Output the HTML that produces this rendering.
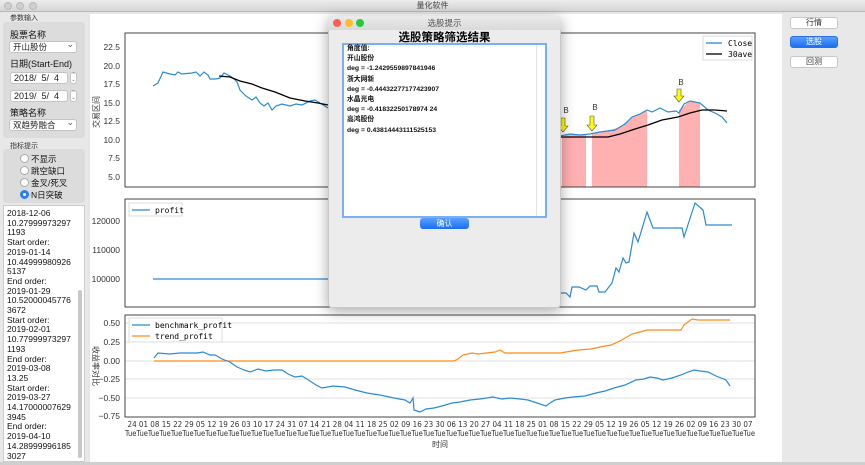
<!DOCTYPE html>
<html><head><meta charset="utf-8"><style>
*{margin:0;padding:0;box-sizing:border-box}
body{width:865px;height:465px;overflow:hidden;background:#e6e6e6;font-family:"Liberation Sans","Noto Sans CJK SC",sans-serif;position:relative;font-size:9px;color:#222}
.abs{position:absolute}
.tb{left:0;top:0;width:865px;height:12px;background:linear-gradient(#ececec,#d6d6d6);border-bottom:1px solid #b8b8b8;text-align:center;font-size:8px;line-height:12px;color:#444}
.dot{width:8px;height:8px;border-radius:50%;top:2px;background:#cfcfcf;border:1px solid #bbb}
.box{background:#dcdcdc;border-radius:3px}
.lbl{font-size:9px;color:#111}
.combo{background:#fff;border:1px solid #c4c4c4;border-radius:3px;font-size:8.5px;line-height:10px;padding-left:3px}
.dd:after{content:"⌄";position:absolute;right:2px;top:-3px;font-size:9px;color:#555}
.radio{width:9px;height:9px;border-radius:50%;background:#fff;border:1px solid #aaa}
.btn{background:#fff;border:1px solid #c8c8c8;border-radius:3px;text-align:center;font-size:8px;line-height:10px;color:#333}
.step{width:7px;height:12px;background:#fff;border:1px solid #c4c4c4;border-radius:3px;font-size:5px;line-height:5px;text-align:center;color:#555}
</style></head><body>
<div class="abs tb">量化软件</div>
<div class="abs dot" style="left:4px"></div><div class="abs dot" style="left:16px"></div><div class="abs dot" style="left:29px"></div>

<div class="abs" style="left:0;top:13px;width:88px;height:452px;background:#e8e8e8"></div>
<div class="abs" style="left:10px;top:13px;font-size:7px;color:#333">参数输入</div>
<div class="abs box" style="left:3px;top:22px;width:82px;height:116px"></div>
<div class="abs lbl" style="left:10px;top:28px">股票名称</div>
<div class="abs combo dd" style="left:9px;top:41px;width:68px;height:12px">开山股份</div>
<div class="abs lbl" style="left:10px;top:57px">日期(Start-End)</div>
<div class="abs combo" style="left:10px;top:72px;width:58px;height:12px;font-size:9px">2018/&nbsp; 5/&nbsp; 4</div>
<div class="abs step" style="left:70px;top:72px">⌃<br>⌄</div>
<div class="abs combo" style="left:10px;top:90px;width:58px;height:12px;font-size:9px">2019/&nbsp; 5/&nbsp; 4</div>
<div class="abs step" style="left:70px;top:90px">⌃<br>⌄</div>
<div class="abs lbl" style="left:10px;top:106px">策略名称</div>
<div class="abs combo dd" style="left:9px;top:119px;width:68px;height:12px">双趋势融合</div>
<div class="abs" style="left:10px;top:141px;font-size:7px;color:#333">指标提示</div>
<div class="abs box" style="left:3px;top:149px;width:82px;height:54px"></div>
<div class="abs radio" style="left:20px;top:154px"></div><div class="abs lbl" style="left:31px;top:153px;font-size:8.5px">不显示</div>
<div class="abs radio" style="left:20px;top:166px"></div><div class="abs lbl" style="left:31px;top:165px;font-size:8.5px">跳空缺口</div>
<div class="abs radio" style="left:20px;top:178px"></div><div class="abs lbl" style="left:31px;top:177px;font-size:8.5px">金叉/死叉</div>
<div class="abs radio" style="left:20px;top:190px;border:3px solid #2a7ff0"></div><div class="abs lbl" style="left:31px;top:189px;font-size:8.5px">N日突破</div>
<div class="abs" style="left:3px;top:205px;width:82px;height:257px;background:#fff;border:1px solid #ccc;overflow:hidden">
<div style="position:absolute;left:3px;top:3px;font-size:8.5px;line-height:9.7px;color:#111;white-space:nowrap">2018-12-06<br>10.27999973297<br>1193<br>Start order:<br>2019-01-14<br>10.44999980926<br>5137<br>End order:<br>2019-01-29<br>10.52000045776<br>3672<br>Start order:<br>2019-02-01<br>10.77999973297<br>1193<br>End order:<br>2019-03-08<br>13.25<br>Start order:<br>2019-03-27<br>14.17000007629<br>3945<br>End order:<br>2019-04-10<br>14.28999996185<br>3027</div>
</div>
<div class="abs" style="left:78px;top:290px;width:4px;height:168px;background:#c8c8c8;border-radius:2px"></div>

<div class="abs" style="left:90px;top:14px;width:692px;height:448px;background:#fff"></div>
<div class="abs" style="left:782px;top:13px;width:83px;height:452px;background:#e8e8e8"></div>
<div class="abs btn" style="left:790px;top:17px;width:48px;height:12px">行情</div>
<div class="abs btn" style="left:790px;top:36px;width:48px;height:12px;background:linear-gradient(#5aa0ff,#1a6ff0);color:#fff;border-color:#2a70e0">选股</div>
<div class="abs btn" style="left:790px;top:56px;width:48px;height:12px">回测</div>

<svg class="abs" style="left:0;top:0" width="865" height="465" font-family="Liberation Sans, Noto Sans CJK SC, sans-serif">
<g>
<polygon fill="#ffb0b0" points="562,137 567,135 575,134 586,135 586,187 562,187"/>
<polygon fill="#ffb0b0" points="592,133 610,130 620,127 632,117 640,114 647,110 647,187 592,187"/>
<polygon fill="#ffb0b0" points="679,110 684,106 690,101 696,102 700,103 700,187 679,187"/>
<rect x="125" y="33" width="630" height="154" fill="none" stroke="#444" stroke-width="1"/>
<g font-size="8.5" fill="#333" text-anchor="end">
<text x="120" y="50">22.5</text><text x="120" y="69">20.0</text><text x="120" y="87">17.5</text><text x="120" y="106">15.0</text><text x="120" y="124">12.5</text><text x="120" y="143">10.0</text><text x="120" y="161">7.5</text><text x="120" y="180">5.0</text>
</g>
<text transform="translate(99,112) rotate(-90)" font-size="8" fill="#333" text-anchor="middle">交易区间</text>
<polyline fill="none" stroke="#2b8bd0" stroke-width="1.2" points="153,86 158,83 163,72 170,74 175,75 178,72 182,74 192,73 196,72 200,76 204,72 208,75 210,79 216,79 220,78 224,73 230,76 234,79 237,82 240,90 246,96 252,100 256,97 260,103 264,106 268,103 272,110 276,106 282,104 290,106 296,104 302,105 310,101 315,100 320,103 328,108"/>
<polyline fill="none" stroke="#000" stroke-width="1.3" points="219,76 230,77 240,81 252,84 262,88 275,92 290,98 305,101 318,103 328,105"/>
<polyline fill="none" stroke="#2b8bd0" stroke-width="1.2" points="560,136 570,134 580,135 590,134 600,132 615,130 625,124 632,117 640,114 647,110 652,112 660,108 668,112 676,111 679,113 684,104 690,101 700,103 708,110 715,113 722,117 727,123"/>
<polyline fill="none" stroke="#000" stroke-width="1.3" points="560,137 608,137 620,134 635,129 648,125 662,120 678,117 690,113 702,110 715,110 727,111"/>
<g fill="#ffff00" stroke="#555" stroke-width="0.6">
<polygon points="561,118 565,118 565,126 568,126 563,132 558,126 561,126"/>
<polygon points="590,116 594,116 594,125 597,125 592,131 587,125 590,125"/>
<polygon points="677,89 681,89 681,96 684,96 679,102 674,96 677,96"/>
</g>
<g font-size="8" fill="#333" text-anchor="middle"><text x="566" y="113">B</text><text x="595" y="110">B</text><text x="681" y="85">B</text></g>
<rect x="703" y="36" width="49" height="24" fill="#fff" stroke="#ddd"/>
<line x1="706" y1="43" x2="722" y2="43" stroke="#2b8bd0" stroke-width="1.3"/><text x="728" y="46" font-size="8" font-family="DejaVu Sans Mono,monospace">Close</text>
<line x1="706" y1="54" x2="722" y2="54" stroke="#000" stroke-width="1.3"/><text x="728" y="57" font-size="8" font-family="DejaVu Sans Mono,monospace">30ave</text>
</g>
<g>
<rect x="125" y="199" width="630" height="108" fill="none" stroke="#444"/>
<g font-size="8.5" fill="#333" text-anchor="end"><text x="120" y="224">120000</text><text x="120" y="253">110000</text><text x="120" y="282">100000</text></g>
<polyline fill="none" stroke="#2b8bd0" stroke-width="1.2" points="153,279 330,279"/>
<polyline fill="none" stroke="#2b8bd0" stroke-width="1.2" points="560,293 566,293 570,297 572,287 579,287 586,290 590,286 597,286 599,292 605,292 612,283 616,268 619,272 623,258 626,263 629,262 634,233 638,242 647,212 653,228 682,228 684,237 695,203 703,210 706,225 732,225"/>
<rect x="129" y="203" width="53" height="13" fill="#fff" stroke="#ddd"/>
<line x1="132" y1="210" x2="150" y2="210" stroke="#2b8bd0" stroke-width="1.3"/><text x="155" y="213" font-size="8" font-family="DejaVu Sans Mono,monospace">profit</text>
</g>
<g>
<g stroke="#e2e2e2" stroke-width="1"><line x1="125" y1="323" x2="755" y2="323"/><line x1="125" y1="342" x2="755" y2="342"/><line x1="125" y1="361" x2="755" y2="361"/><line x1="125" y1="379" x2="755" y2="379"/><line x1="125" y1="398" x2="755" y2="398"/></g>
<rect x="125" y="315" width="630" height="102" fill="none" stroke="#444"/>
<g font-size="8.5" fill="#333" text-anchor="end"><text x="120" y="326">0.50</text><text x="120" y="345">0.25</text><text x="120" y="364">0.00</text><text x="120" y="382">−0.25</text><text x="120" y="401">−0.50</text><text x="120" y="419">−0.75</text></g>
<text transform="translate(93,366) rotate(90)" font-size="8" fill="#333" text-anchor="middle">收益率对比</text>
<polyline fill="none" stroke="#ff8c1a" stroke-width="1.2" points="154,361 454,361 458,359 463,355 472,353 478,354 495,352 500,350 505,353 560,353 578,350 591,349 600,347 611,345 620,341 632,334 640,332 647,330 681,330 684,325 692,319 698,320 730,320"/>
<polyline fill="none" stroke="#2b8bd0" stroke-width="1.2" points="154,358 158,353 170,354 180,353 197,353 203,352 210,355 215,355 222,359 230,362 237,367 244,370 250,372 258,369 266,371 274,370 282,370 288,374 295,377 302,376 310,381 316,385 322,388 333,386 345,387 355,390 367,393 380,395 394,398 405,400 410,403 413,398 414,410 420,412 426,409 434,408 442,406 452,403 460,402 470,400 480,399 493,397 502,399 510,398 520,399 528,400 537,403 546,406 550,403 555,400 565,398 573,397 585,396 596,393 605,391 614,388 625,385 636,380 644,379 650,377 657,378 663,380 672,378 681,375 688,372 694,370 700,371 708,372 716,376 726,380 730,386"/>
<rect x="129" y="318" width="93" height="24" fill="#fff" stroke="#ddd"/>
<line x1="132" y1="325" x2="150" y2="325" stroke="#2b8bd0" stroke-width="1.3"/><text x="155" y="328" font-size="8" font-family="DejaVu Sans Mono,monospace">benchmark_profit</text>
<line x1="132" y1="336" x2="150" y2="336" stroke="#ff8c1a" stroke-width="1.3"/><text x="155" y="339" font-size="8" font-family="DejaVu Sans Mono,monospace">trend_profit</text>
<g font-size="7.6" fill="#333" text-anchor="middle" font-family="DejaVu Sans Condensed,Liberation Sans Narrow,sans-serif">
<text x="440" y="427" textLength="625" lengthAdjust="spacingAndGlyphs">24 01 08 15 22 29 05 12 19 26 03 10 17 24 31 07 14 21 28 04 11 18 25 02 09 16 23 30 06 13 20 27 04 11 18 25 01 08 15 22 29 05 12 19 26 05 12 19 26 02 09 16 23 30 07</text>
<text x="440" y="436" textLength="630" lengthAdjust="spacingAndGlyphs">TueTueTueTueTueTueTueTueTueTueTueTueTueTueTueTueTueTueTueTueTueTueTueTueTueTueTueTueTueTueTueTueTueTueTueTueTueTueTueTueTueTueTueTueTueTueTueTueTueTueTueTueTueTueTue</text>
</g>
<text x="440" y="447" font-size="8" fill="#333" text-anchor="middle">时间</text>
</g>
</svg>

<div class="abs" style="left:328px;top:16px;width:233px;height:292px;background:#ececec;border-radius:4px;box-shadow:0 3px 14px rgba(0,0,0,.35);border:1px solid #c8c8c8"></div>
<div class="abs" style="left:328px;top:16px;width:233px;height:14px;background:linear-gradient(#ebebeb,#d9d9d9);border-radius:4px 4px 0 0;text-align:center;font-size:8.5px;line-height:14px;color:#555">选股提示</div>
<div class="abs" style="left:333px;top:19px;width:8px;height:8px;border-radius:50%;background:#fc5f57"></div>
<div class="abs" style="left:345px;top:19px;width:8px;height:8px;border-radius:50%;background:#fdbc2e"></div>
<div class="abs" style="left:356px;top:19px;width:8px;height:8px;border-radius:50%;background:#2ac840"></div>
<div class="abs" style="left:328px;top:29px;width:233px;text-align:center;font-size:11.5px;font-weight:bold;color:#000">选股策略筛选结果</div>
<div class="abs" style="left:342px;top:43px;width:205px;height:175px;background:#fff;border:2px solid #7ab0f0"></div>
<div class="abs" style="left:536px;top:45px;width:1px;height:171px;background:#e4e4e4"></div>
<div class="abs" style="left:347px;top:44px;font-size:6.8px;line-height:10.2px;font-weight:bold;color:#111">角度值:<br>开山股份<br>deg = -1.2429559897841946<br>浙大网新<br>deg = -0.44432277177423907<br>水晶光电<br>deg = -0.41832250178974 24<br>高鸿股份<br>deg = 0.43814443111525153</div>
<div class="abs" style="left:420px;top:218px;width:49px;height:11px;background:linear-gradient(#5aa0ff,#1a6ff0);border-radius:3px;color:#fff;font-size:8px;text-align:center;line-height:11px">确认</div>
<div class="abs" style="left:0;top:462px;width:865px;height:3px;background:#cfcfcf"></div>
</body></html>
